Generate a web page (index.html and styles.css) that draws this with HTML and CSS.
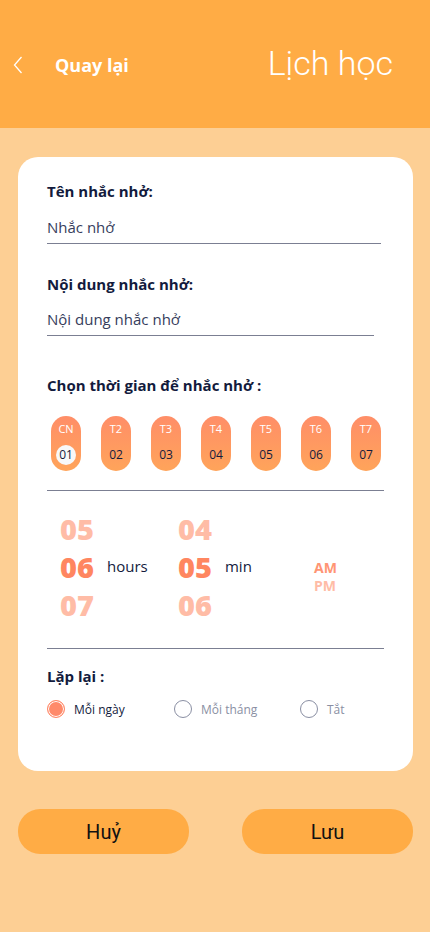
FILE: index.html
```html
<!DOCTYPE html>
<html lang="vi">

<head>
    <meta charset="UTF-8">
    <meta name="viewport" content="width=device-width, initial-scale=1.0">
    <title>Lịch học</title>
    <link rel="stylesheet" href="styles.css">
</head>

<body>
    <div class="header">
        <div class="back">
            <svg class="back-icon" width="10" height="18" viewBox="0 0 10 18">
                <path d="M8.5 1 L1.5 9 L8.5 17" fill="none" stroke="#fff" stroke-width="1.3" />
            </svg>
            <span class="back-text">Quay lại</span>
        </div>
        <div class="title">Lịch học</div>
    </div>

    <div class="content">
        <div class="card">
            <div class="field">
                <div class="label">Tên nhắc nhở:</div>
                <div class="input">Nhắc nhở</div>
            </div>
            <div class="field">
                <div class="label">Nội dung nhắc nhở:</div>
                <div class="input input-short">Nội dung nhắc nhở</div>
            </div>

            <div class="label label-time">Chọn thời gian để nhắc nhở :</div>
            <div class="days">
                <div class="day"><span class="day-name">CN</span><span class="day-num active">01</span></div>
                <div class="day"><span class="day-name">T2</span><span class="day-num">02</span></div>
                <div class="day"><span class="day-name">T3</span><span class="day-num">03</span></div>
                <div class="day"><span class="day-name">T4</span><span class="day-num">04</span></div>
                <div class="day"><span class="day-name">T5</span><span class="day-num">05</span></div>
                <div class="day"><span class="day-name">T6</span><span class="day-num">06</span></div>
                <div class="day"><span class="day-name">T7</span><span class="day-num">07</span></div>
            </div>

            <div class="picker">
                <div class="col col-hours">
                    <div class="num dim">05</div>
                    <div class="num-row"><span class="num">06</span><span class="unit">hours</span></div>
                    <div class="num dim">07</div>
                </div>
                <div class="col col-min">
                    <div class="num dim">04</div>
                    <div class="num-row"><span class="num">05</span><span class="unit">min</span></div>
                    <div class="num dim">06</div>
                </div>
                <div class="ampm">
                    <div class="am">AM</div>
                    <div class="pm">PM</div>
                </div>
            </div>

            <div class="label label-repeat">Lặp lại :</div>
            <div class="repeat">
                <label class="option option-day"><span class="radio checked"></span>Mỗi ngày</label>
                <label class="option option-month muted"><span class="radio"></span>Mỗi tháng</label>
                <label class="option muted"><span class="radio"></span>Tắt</label>
            </div>
        </div>

        <div class="actions">
            <button class="btn">Huỷ</button>
            <button class="btn">Lưu</button>
        </div>
    </div>
</body>

</html>
```

FILE: styles.css
```css
body {
    margin: 0;
    width: 430px;
    min-height: 932px;
    background-color: #FDCF94;
    font-family: "Open Sans", "Noto Sans", sans-serif;
    color: #131B3D;
}

.header {
    height: 128px;
    background-color: #FFAC45;
    display: flex;
    align-items: center;
    justify-content: space-between;
    padding: 0 37px 0 13px;
    box-sizing: border-box;
}

.back {
    display: flex;
    align-items: center;
    margin-top: 2px;
}

.back-icon {
    display: block;
}

.back-text {
    margin-left: 32px;
    color: #fff;
    font-size: 18px;
    font-weight: 700;
}

.title {
    color: #fff;
    font-family: Roboto, sans-serif;
    font-weight: 300;
    font-size: 34px;
    margin-top: -2px;
}

.content {
    padding: 29px 17px 0 18px;
}

.card {
    background: #fff;
    border-radius: 20px;
    height: 614px;
    box-sizing: border-box;
    padding: 24px 29px 0 29px;
}

.label {
    font-size: 15px;
    font-weight: 700;
    line-height: 20px;
}

.field {
    margin-bottom: 30px;
}

.input {
    margin-top: 15px;
    width: 334px;
    padding-bottom: 5px;
    border-bottom: 1px solid #7B7F92;
    font-size: 15px;
    line-height: 22px;
    color: #363D5C;
}

.input-short {
    width: 327px;
    margin-top: 14px;
}

.field + .field {
    margin-bottom: 39px;
}

.days {
    display: flex;
    gap: 20px;
    margin-top: 21px;
    padding: 0 0 19px 4px;
    border-bottom: 1px solid #7B7F92;
    width: 333px;
}

.day {
    width: 30px;
    height: 55px;
    border-radius: 15px;
    background: linear-gradient(#FF8E68, #FFA45A);
    display: flex;
    flex-direction: column;
    align-items: center;
    font-size: 11px;
}

.day-name {
    color: #fff;
    margin-top: 5px;
    line-height: 15px;
}

.day-num {
    margin-top: 9px;
    width: 20px;
    height: 20px;
    border-radius: 50%;
    text-align: center;
    line-height: 20px;
    font-size: 12px;
}

.day-num.active {
    background: #F8F8F8;
}

.picker {
    display: flex;
    align-items: center;
    padding: 19px 0 24px 13px;
    border-bottom: 1px solid #7B7F92;
    width: 324px;
}

.col {
    display: flex;
    flex-direction: column;
}

.col-hours {
    width: 118px;
}

.col-min {
    width: 136px;
}

.num {
    font-size: 29px;
    font-weight: 800;
    line-height: 38px;
    color: #FF8660;
}

.num.dim {
    color: #FFBCA6;
}

.num-row {
    display: flex;
    align-items: center;
}

.unit {
    margin-left: 13px;
    font-size: 15px;
    margin-top: -2px;
}

.ampm {
    font-size: 14px;
    font-weight: 700;
    line-height: 18px;
    margin-top: 20px;
}

.am {
    color: #FF9574;
}

.pm {
    color: #FFBCA6;
}

.label-repeat {
    margin-top: 17px;
}

.repeat {
    display: flex;
    margin-top: 14px;
}

.option {
    display: flex;
    align-items: center;
    font-size: 12px;
    gap: 9px;
}

.option-day {
    width: 127px;
}

.option-month {
    width: 126px;
}

.muted {
    color: #8A8FA3;
}

.radio {
    width: 16px;
    height: 16px;
    border-radius: 50%;
    border: 1px solid #8A8FA3;
}

.radio.checked {
    background: #FF8A6A;
    border-color: #FF8A6A;
    box-shadow: inset 0 0 0 1px #fff;
}

.actions {
    display: flex;
    justify-content: space-between;
    margin-top: 38px;
}

.btn {
    width: 171px;
    height: 45px;
    border: none;
    border-radius: 22px;
    background: #FFAC45;
    font-family: Roboto, sans-serif;
    font-size: 20px;
    color: #111;
}
```
